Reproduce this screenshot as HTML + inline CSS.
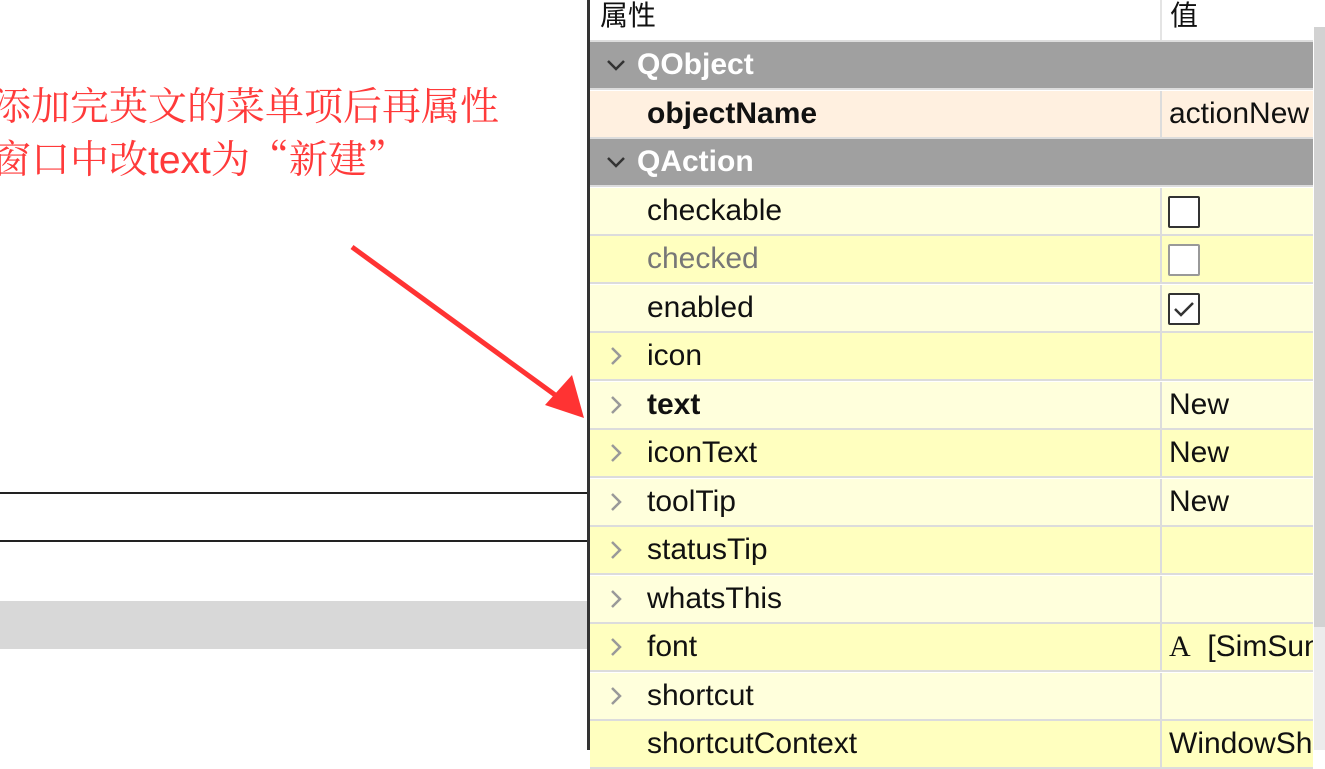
<!DOCTYPE html>
<html><head><meta charset="utf-8"><style>
body{margin:0;width:1325px;height:750px;overflow:hidden;background:#fff;position:relative;font-family:"Liberation Sans","Noto Sans CJK SC",sans-serif}
.a{position:absolute}
.row{position:absolute;left:590px;width:723px;height:46px;border-bottom:2px solid #dcdcdc;font-size:30px;line-height:46px;color:#111;overflow:hidden}
.row .n{position:absolute;left:57px;top:0}
.row .v{position:absolute;left:579px;top:0;white-space:nowrap}
.row .d{position:absolute;left:570px;top:0;width:2px;height:48px;background:#dcdcdc}
.row .c{position:absolute;left:16px;top:13px}
.g{background:#a0a0a0;color:#fff;font-weight:bold}
.l{background:#ffffdc}.y{background:#ffffbf}
.cb{position:absolute;left:578px;top:8px;width:28px;height:28px;border:2px solid #333;background:#fff;border-radius:2px}
</style></head><body>
<div class="a" style="left:-8px;top:78px;font-size:39px;line-height:53px;color:#ff3a3a;font-family:'Noto Serif CJK SC','Liberation Sans',serif;white-space:nowrap">添加完英文的菜单项后再属性<br>窗口中改<span style="font-family:'Liberation Sans',sans-serif">text</span>为“新建”</div>
<svg class="a" style="left:340px;top:240px" width="250" height="180"><line x1="12" y1="7" x2="222" y2="160" stroke="#f33" stroke-width="5"/><polygon points="244,178 205,165 232,135" fill="#f33"/></svg>
<div class="a" style="left:-2px;top:492px;width:587px;height:46px;border:2px solid #222"></div>
<div class="a" style="left:0;top:601px;width:588px;height:48px;background:#d8d8d8"></div>
<div class="a" style="left:587px;top:0;width:3px;height:750px;background:#333"></div>
<div class="a" style="left:590px;top:0;width:723px;height:40px;background:#fff;border-bottom:2px solid #ddd;font-size:28px;line-height:32px;color:#111"><span style="position:absolute;left:10px">属性</span><span style="position:absolute;left:580px">值</span><div style="position:absolute;left:570px;top:0;width:2px;height:40px;background:#e4e4e4"></div></div>
<div class="a" style="left:1314px;top:27px;width:11px;height:600px;background:#d2d2d2"></div>
<div class="a" style="left:1314px;top:627px;width:11px;height:123px;background:#ececec"></div>

<div class="row g" style="top:42px"><svg class="c" width="20" height="20"><polyline points="2,6 10,14 18,6" fill="none" stroke="#333" stroke-width="2.5"/></svg><span class="n" style="left:47px">QObject</span></div>
<div class="row" style="top:90.5px;background:#fff0e0"><div class="d"></div><span class="n" style="font-weight:bold">objectName</span><span class="v">actionNew</span></div>
<div class="row g" style="top:139px"><svg class="c" width="20" height="20"><polyline points="2,6 10,14 18,6" fill="none" stroke="#333" stroke-width="2.5"/></svg><span class="n" style="left:47px">QAction</span></div>
<div class="row l" style="top:187.5px"><div class="d"></div><span class="n">checkable</span><div class="cb"></div></div>
<div class="row y" style="top:236px"><div class="d"></div><span class="n" style="color:#777">checked</span><div class="cb" style="border-color:#999"></div></div>
<div class="row l" style="top:284.5px"><div class="d"></div><span class="n">enabled</span><div class="cb"><svg width="28" height="28" style="display:block"><polyline points="5,14 11,20 23,8" fill="none" stroke="#333" stroke-width="2.5"/></svg></div></div>
<div class="row y" style="top:333px"><div class="d"></div><svg class="c" width="20" height="20"><polyline points="6,2 14,10 6,18" fill="none" stroke="#999" stroke-width="2.5"/></svg><span class="n">icon</span></div>
<div class="row l" style="top:381.5px"><div class="d"></div><svg class="c" width="20" height="20"><polyline points="6,2 14,10 6,18" fill="none" stroke="#999" stroke-width="2.5"/></svg><span class="n" style="font-weight:bold">text</span><span class="v">New</span></div>
<div class="row y" style="top:430px"><div class="d"></div><svg class="c" width="20" height="20"><polyline points="6,2 14,10 6,18" fill="none" stroke="#999" stroke-width="2.5"/></svg><span class="n">iconText</span><span class="v">New</span></div>
<div class="row l" style="top:478.5px"><div class="d"></div><svg class="c" width="20" height="20"><polyline points="6,2 14,10 6,18" fill="none" stroke="#999" stroke-width="2.5"/></svg><span class="n">toolTip</span><span class="v">New</span></div>
<div class="row y" style="top:527px"><div class="d"></div><svg class="c" width="20" height="20"><polyline points="6,2 14,10 6,18" fill="none" stroke="#999" stroke-width="2.5"/></svg><span class="n">statusTip</span></div>
<div class="row l" style="top:575.5px"><div class="d"></div><svg class="c" width="20" height="20"><polyline points="6,2 14,10 6,18" fill="none" stroke="#999" stroke-width="2.5"/></svg><span class="n">whatsThis</span></div>
<div class="row y" style="top:624px"><div class="d"></div><svg class="c" width="20" height="20"><polyline points="6,2 14,10 6,18" fill="none" stroke="#999" stroke-width="2.5"/></svg><span class="n">font</span><span class="v"><span style="font-family:'Liberation Serif',serif">A</span>&nbsp; [SimSun</span></div>
<div class="row l" style="top:672.5px"><div class="d"></div><svg class="c" width="20" height="20"><polyline points="6,2 14,10 6,18" fill="none" stroke="#999" stroke-width="2.5"/></svg><span class="n">shortcut</span></div>
<div class="row y" style="top:721px"><div class="d"></div><span class="n">shortcutContext</span><span class="v">WindowSh</span></div>
</body></html>
